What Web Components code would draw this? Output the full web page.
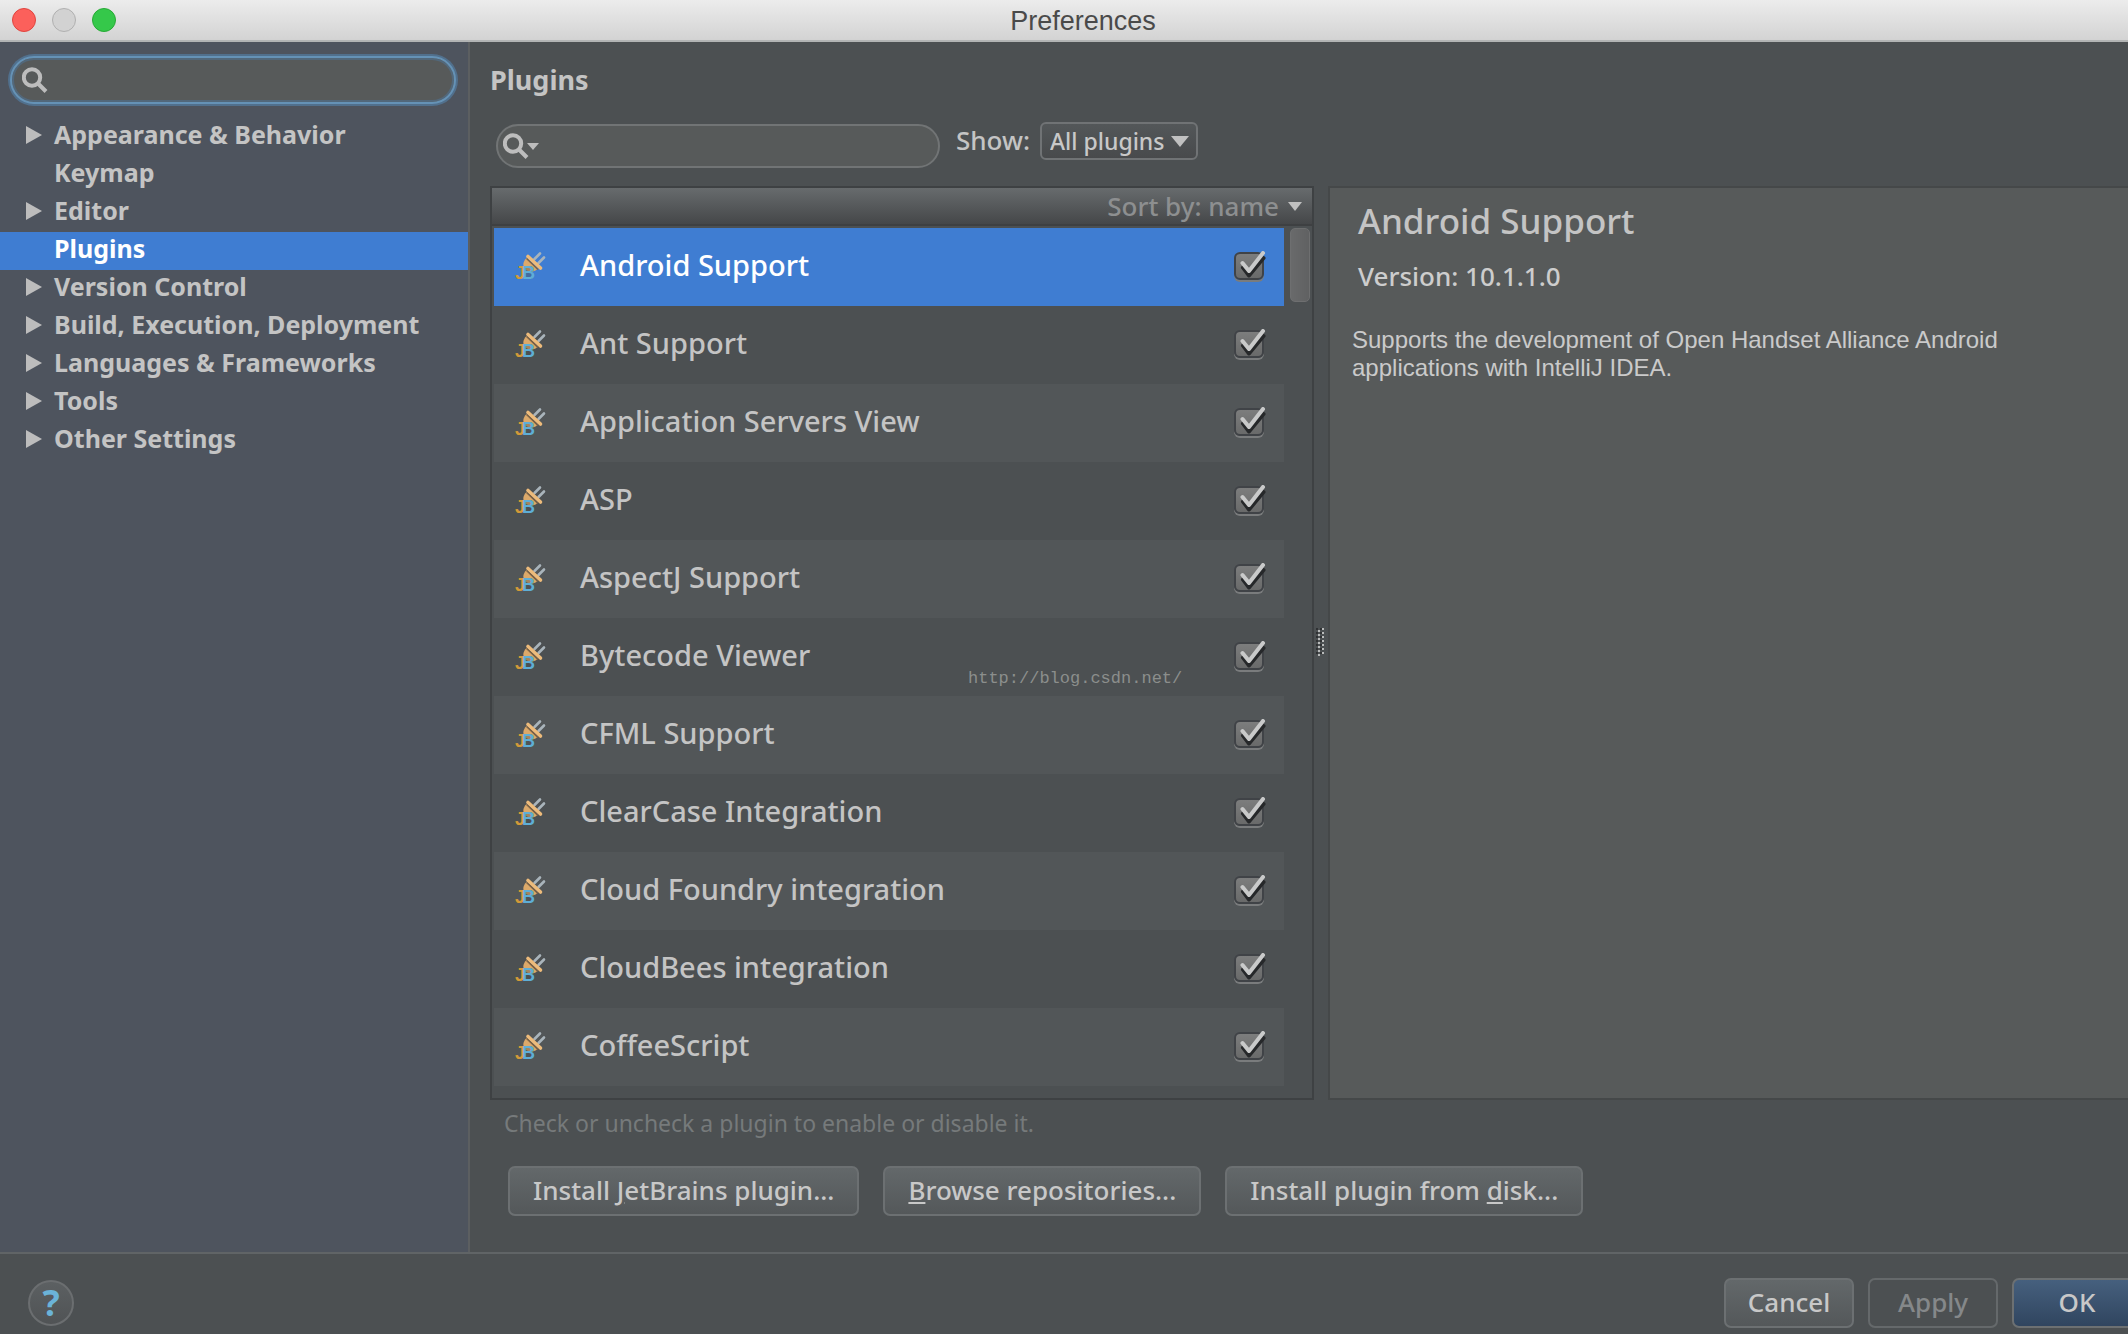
<!DOCTYPE html>
<html lang="en">
<head>
<meta charset="utf-8">
<title>Preferences</title>
<style>
html, body { margin: 0; height: 100%; overflow: hidden; background: #4c5052; }
body { font-family: "Noto Sans", "Open Sans", sans-serif; font-weight: 500; color: #c4c4c4; }
</style>
</head>
<body>
<prefs-window></prefs-window>
<script>
function define(name, css, html, init) {
  const template = document.createElement('template');
  template.innerHTML = '<style>*{box-sizing:border-box}' + css + '</style>' + html;
  customElements.define(name, class extends HTMLElement {
    connectedCallback() {
      if (this.shadowRoot) return;
      const root = this.attachShadow({ mode: 'open' });
      root.append(template.content.cloneNode(true));
      if (init) init.call(this, root);
    }
  });
}

define('title-bar', `
  :host { display: grid; grid-template-columns: 1fr auto 1fr; align-items: center; height: 42px; padding: 0 12px; margin-right: -38px;
    box-sizing: border-box; border-bottom: 2px solid #b2b4b4; background: linear-gradient(#ececec, #d3d3d3);
    font: 27px "Liberation Sans", Arial, sans-serif; color: #4a4a4a; }
  .lights { display: flex; gap: 16px; }
  button { width: 24px; height: 24px; padding: 0; border-radius: 50%; border: 1px solid #e0443e; background: #fc605b; }
  .min { background: #d2d2d2; border-color: #b0b0b0; }
  .max { background: #35c84a; border-color: #27aa35; }
  h1 { margin: 0; padding-top: 2px; font: inherit; }`,
  `<div class="lights"><button aria-label="Close"></button><button class="min" aria-label="Minimize"></button><button class="max" aria-label="Zoom"></button></div>
  <h1><slot></slot></h1>`);

define('search-box', `
  :host { display: block; }
  .box { display: flex; align-items: center; height: 44px; padding-left: 5px; border: 2px solid #717475; border-radius: 22px; background: #575a5a; }
  :host([focused]) .box { height: 48px; border-color: #6592b6; border-radius: 24px; padding-left: 10px; box-shadow: 0 0 0 2px #51708d, inset 0 0 0 2px #52687b; }
  svg { flex: none; }
  .menu { display: none; margin-left: -2px; }
  :host([menu]) .menu { display: block; }
  input { flex: 1; min-width: 0; margin: 0 20px 0 6px; border: 0; outline: 0; background: none; font: 24px "Noto Sans", sans-serif; color: #c4c4c4; }`,
  `<div class="box">
    <svg width="26" height="26" viewBox="0 0 26 26" fill="none" stroke="#bdbdbd" stroke-width="4"><circle cx="10" cy="10.500" r="8.200"/><path d="M15.500 16l8.500 8.500"/></svg>
    <svg class="menu" width="12" height="7" viewBox="0 0 12 7"><path d="M0 0h12L6 7z" fill="#bdbdbd"/></svg>
    <input type="text">
  </div>`,
  function (root) { root.querySelector('input').setAttribute('aria-label', this.getAttribute('label')); });

define('tree-item', `
  :host { display: block; }
  a { display: flex; align-items: center; height: 38px; padding: 0 12px 6px 26px; gap: 12px; text-decoration: none;
    font-size: 25px; line-height: 32px; font-weight: 700; color: #c4c4c4; white-space: nowrap; }
  svg { width: 16px; height: 20px; flex: none; visibility: hidden; }
  :host([branch]) svg { visibility: visible; }
  :host([selected]) a { background: #3f7dd2; color: #fff; }`,
  `<a href="#"><svg viewBox="0 0 16 20"><path d="M0 2l16 9L0 20z" fill="#bdbdbd"/></svg><slot></slot></a>`);

define('side-bar', `
  :host { display: block; background: #4e545e; border-right: 2px solid #5c5f61; }
  search-box { margin: 14px 12px 14px 10px; }`,
  `<search-box focused label="Search settings"></search-box>
  <nav>
    <tree-item branch>Appearance &amp; Behavior</tree-item>
    <tree-item>Keymap</tree-item>
    <tree-item branch>Editor</tree-item>
    <tree-item selected>Plugins</tree-item>
    <tree-item branch>Version Control</tree-item>
    <tree-item branch>Build, Execution, Deployment</tree-item>
    <tree-item branch>Languages &amp; Frameworks</tree-item>
    <tree-item branch>Tools</tree-item>
    <tree-item branch>Other Settings</tree-item>
  </nav>`);

define('filter-select', `
  :host { display: inline-flex; align-items: center; gap: 10px; font-size: 26px; line-height: 36px; }
  .control { display: grid; }
  select, svg { grid-area: 1 / 1; }
  select { appearance: none; height: 38px; width: 158px; margin: 0; padding: 0 30px 0 8px; border: 2px solid #707375; border-radius: 6px; outline: 0;
    background: linear-gradient(#535759, #484a4c); font: 500 23px "Noto Sans", sans-serif; color: #c8c8c8; }
  label { padding-bottom: 2px; }
  svg { align-self: center; justify-self: end; margin-right: 9px; pointer-events: none; }`,
  `<label for="show">Show:</label>
  <span class="control"><select id="show"><option>All plugins</option><option>Enabled</option><option>Disabled</option><option>Bundled</option><option>Custom</option></select>
  <svg width="18" height="11" viewBox="0 0 18 11"><path d="M0 0h18L9 11z" fill="#c0c0c0"/></svg></span>`);

define('plugin-row', `
  :host { display: block; }
  :host(:nth-of-type(odd)) { background: #525658; }
  :host([selected]) { background: #3f7dd2; color: #fff; }
  label { display: grid; grid-template-columns: 30px 1fr 32px; align-items: center; column-gap: 34px; height: 78px; padding: 0 18px 2px 22px; font-size: 29px; white-space: nowrap; }
  .name { line-height: 74px; padding-bottom: 2px; }
  .tick { display: grid; }
  .tick > * { grid-area: 1 / 1; }
  .plug { overflow: visible; }
  input { appearance: none; width: 30px; height: 28px; margin: 1px 0 0; border: 2px solid #404347; border-radius: 6px; background: linear-gradient(#7c7d7d, #696a6a); box-shadow: 0 2px #7a7c7d; }
  .tick svg { visibility: hidden; pointer-events: none; }
  input:checked + svg { visibility: visible; }
  text { font: 700 18px "Liberation Sans Narrow", "Liberation Sans", sans-serif; }`,
  `<label>
    <svg class="plug" width="30" height="30" viewBox="0 0 30 30" aria-hidden="true">
      <path d="M18.500 8L24 2.500M22.500 12L28 6.500" stroke="#a9b4bb" stroke-width="2.600" stroke-linecap="round"/>
      <path d="M10.500 7C7 10.500 6.500 14 8.500 17.500C12 21.500 17 21.500 21 18.500z" fill="#dca96a"/>
      <path d="M12 5.500L24.500 17" stroke="#edbb7b" stroke-width="3.600" stroke-linecap="round"/>
      <path d="M10.500 7.500L22 18.500" stroke="#7d6245" stroke-width="1.400"/>
      <path d="M7 15h9v13h-9z" fill="#4c5052" opacity=".4"/>
      <text x="-1" y="28" fill="#d29a38">J</text><text x="6" y="28" fill="#5eaed6">B</text>
    </svg>
    <span class="name"><slot></slot></span>
    <span class="tick"><input type="checkbox" checked>
      <svg width="32" height="31" viewBox="0 0 32 31" fill="none" stroke-linecap="round" stroke-linejoin="round">
        <path d="M9 16.500l6 8L29.500 7" stroke="#26282a" stroke-width="4"/><path d="M8.500 12l6.500 8L29 2" stroke="#c9caca" stroke-width="4"/>
      </svg></span>
  </label>`);

define('plugin-list', `
  :host { display: flex; flex-direction: column; border: 2px solid #3e4143; min-width: 0; min-height: 0; overflow: hidden; }
  header { flex: none; display: flex; justify-content: flex-end; height: 38px; border-bottom: 2px solid #3e4042; background: linear-gradient(#676b6d, #454749); }
  header button { display: flex; align-items: center; gap: 9px; padding: 0 10px 0 0; border: 0; background: none; font: 500 26px/36px "Noto Sans", sans-serif; color: #8d8f90; }
  .body { display: flex; flex: 1; min-height: 0; padding: 2px 2px 0; gap: 6px; }
  .rows { flex: 1; min-width: 0; }
  .bar { width: 20px; height: 74px; border-radius: 5px; background: linear-gradient(90deg, #696a6b, #606162); border: 1px solid #6e6f70; }`,
  `<header><button>Sort by: name <svg width="14" height="9" viewBox="0 0 14 9"><path d="M0 0h14L7 9z" fill="#c0c0c0"/></svg></button></header>
  <div class="body"><div class="rows"><slot></slot></div><div class="bar"></div></div>`);

define('split-handle', `
  :host { display: grid; place-items: center; }`,
  `<svg width="10" height="30" viewBox="0 0 10 30"></svg>`,
  function (root) {
    let dots = '';
    for (let y = 0; y < 7; y++) {
      dots += `<path d="M0 ${4 * y}h2v2h-2zM4 ${4 * y}h2v2h-2z" fill="#2f3133"/><path d="M2 ${4 * y + 2}h2v2h-2zM6 ${4 * y}h2v2h-2z" fill="#b9bbbb"/>`;
    }
    root.querySelector('svg').innerHTML = dots;
  });

define('plugin-details', `
  :host { display: block; min-width: 0; border: 2px solid #454849; border-right: 0; background: #575a5a; padding: 9px 22px; }
  h3 { margin: 0; padding-left: 6px; font-size: 35px; line-height: 48px; font-weight: 500; }
  .version { margin: 11px 0 0; padding-left: 6px; font-size: 26px; line-height: 40px; color: #cdcdcd; }
  .text { margin: 30px 0 0; max-width: 700px; font: 24px/28px "Liberation Sans", Arial, sans-serif; color: #cacaca; }`,
  `<h3><slot name="title"></slot></h3><p class="version"><slot name="version"></slot></p><p class="text"><slot></slot></p>`);

define('push-button', `
  :host { display: inline-block; }
  button { height: 50px; padding: 0 23px 3px; border: 2px solid #6c7072; border-radius: 7px; background: linear-gradient(#63686a, #54585a);
    font: 500 26px "Noto Sans", sans-serif; color: #c8c8c8; white-space: nowrap; }
  :host([wide]) button { width: 130px; padding: 0 0 3px; }
  :host([primary]) button { background: linear-gradient(#46607e, #30455f); }
  button:disabled { background: none; border-color: #65696b; color: #85888a; }`,
  `<button><slot></slot></button>`,
  function (root) { root.querySelector('button').disabled = this.hasAttribute('disabled'); });

define('plugins-page', `
  :host { display: flex; flex-direction: column; min-width: 0; min-height: 0; padding: 21px 0 36px 20px; }
  h2 { margin: 0; font-size: 27px; line-height: 34px; font-weight: 700; }
  .filter { display: flex; align-items: flex-start; gap: 16px; margin: 25px 0 18px; padding-left: 6px; }
  .filter search-box { width: 444px; margin-top: 2px; }
  .panes { flex: 1; min-height: 0; display: grid; grid-template-columns: minmax(0, 824fr) 14px minmax(0, 800fr); position: relative; }
  .mark { position: absolute; left: 478px; top: 481px; font: 17px/24px "Liberation Mono", monospace; color: #8b8e8c; }
  .hint { margin: 7px 0 27px; padding-left: 14px; font-size: 23px; line-height: 32px; font-weight: 400; color: #767a7b; }
  .actions { display: flex; gap: 24px; padding-left: 18px; }`,
  `<h2>Plugins</h2>
  <div class="filter"><search-box menu label="Filter plugins"></search-box><filter-select></filter-select></div>
  <div class="panes">
    <plugin-list>
      <plugin-row selected>Android Support</plugin-row>
      <plugin-row>Ant Support</plugin-row>
      <plugin-row>Application Servers View</plugin-row>
      <plugin-row>ASP</plugin-row>
      <plugin-row>AspectJ Support</plugin-row>
      <plugin-row>Bytecode Viewer</plugin-row>
      <plugin-row>CFML Support</plugin-row>
      <plugin-row>ClearCase Integration</plugin-row>
      <plugin-row>Cloud Foundry integration</plugin-row>
      <plugin-row>CloudBees integration</plugin-row>
      <plugin-row>CoffeeScript</plugin-row>
    </plugin-list>
    <split-handle></split-handle>
    <plugin-details><span slot="title">Android Support</span><span slot="version">Version: 10.1.1.0</span>Supports the development of Open Handset Alliance Android applications with IntelliJ IDEA.</plugin-details>
    <span class="mark">http://blog.csdn.net/</span>
  </div>
  <p class="hint">Check or uncheck a plugin to enable or disable it.</p>
  <div class="actions">
    <push-button>Install <u>J</u>etBrains plugin...</push-button>
    <push-button><u>B</u>rowse repositories...</push-button>
    <push-button>Install plugin from <u>d</u>isk...</push-button>
  </div>`);

define('dialog-footer', `
  :host { display: flex; align-items: flex-start; gap: 14px; height: 82px; box-sizing: border-box; padding: 24px 0 0 28px; margin-right: -14px; border-top: 2px solid #606466; }
  .help { width: 46px; height: 46px; margin: 2px auto 0 0; padding: 0; border: 2px solid #6b6e70; border-radius: 50%; background: linear-gradient(#5c6062, #505355);
    font: 700 36px/40px "Noto Sans", sans-serif; color: #6bb3d8; }`,
  `<button class="help">?</button><push-button wide>Cancel</push-button><push-button wide disabled>Apply</push-button><push-button wide primary>OK</push-button>`);

define('prefs-window', `
  :host { display: grid; grid-template-rows: auto minmax(0, 1fr) auto; height: 100vh; overflow: hidden; }
  main { display: grid; grid-template-columns: 470px minmax(0, 1fr); min-height: 0; }`,
  `<title-bar>Preferences</title-bar>
  <main><side-bar></side-bar><plugins-page></plugins-page></main>
  <dialog-footer></dialog-footer>`);
</script>
</body>
</html>
